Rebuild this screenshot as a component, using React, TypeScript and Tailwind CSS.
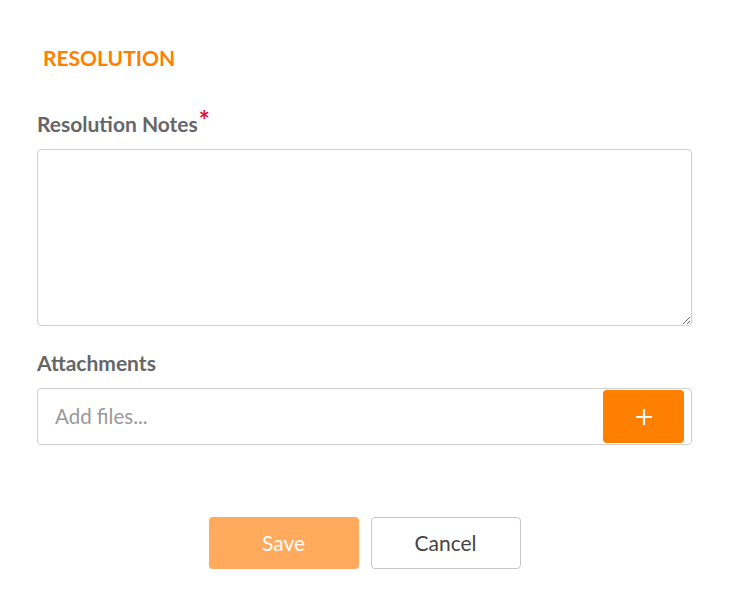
export default function App() {
  return (
    <div className="w-[733px] h-[610px] bg-white font-['Lato',sans-serif]">
      <div className="pl-[37px] pr-[41px] pt-[44px]">
        <h2 className="pl-[6px] text-[21px] leading-[28px] font-bold text-[#ff7f00]">RESOLUTION</h2>

        <label className="mt-[38px] block text-[21px] leading-[28px] font-bold text-[#666]">
          Resolution Notes<span className="text-[#e0103a] align-top text-[26px] leading-[20px] ml-[1px]">*</span>
        </label>
        <textarea className="mt-[11px] block w-full h-[177px] border border-[#d0d0d0] rounded-[4px] outline-none resize-y p-3 text-[18px] text-[#555]" />

        <label className="mt-[24px] block text-[21px] leading-[26px] font-bold text-[#666]">Attachments</label>
        <div className="mt-[12px] flex items-center h-[57px] border border-[#d0d0d0] rounded-[4px] pl-[17px] pr-[7px]">
          <span className="flex-1 text-[20.5px] text-[#999]">Add files...</span>
          <button className="w-[81px] h-[53px] rounded-[4px] bg-[#ff7f00] flex items-center justify-center">
            <svg width="18" height="18" viewBox="0 0 18 18">
              <path d="M9 1v16M1 9h16" stroke="white" strokeWidth="2.2" />
            </svg>
          </button>
        </div>

        <div className="mt-[72px] flex justify-center gap-[12px]">
          <button className="w-[150px] h-[52px] rounded-[4px] bg-[#ffaa5c] text-white text-[21px]">Save</button>
          <button className="w-[150px] h-[52px] rounded-[4px] border border-[#c8c8c8] bg-white text-[#444] text-[21px]">Cancel</button>
        </div>
      </div>
    </div>
  );
}
